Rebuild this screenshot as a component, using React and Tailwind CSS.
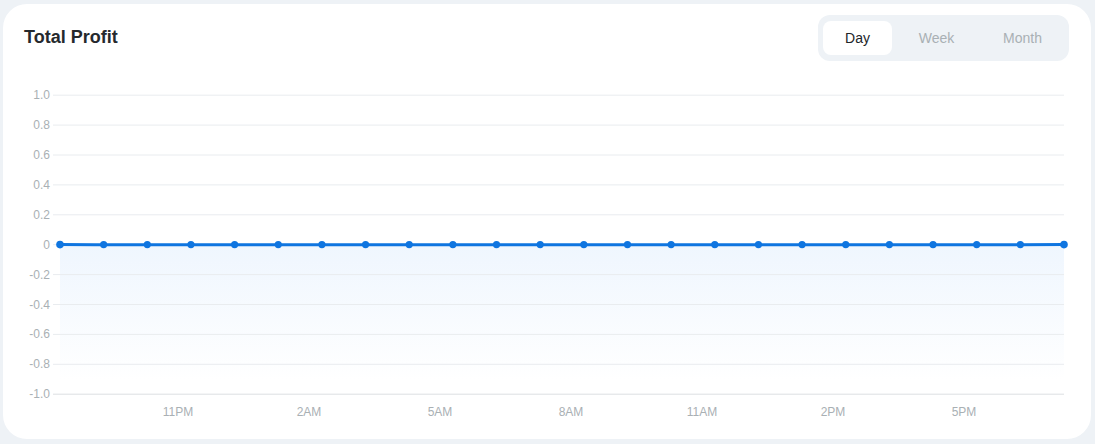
const yLabels = ["1.0","0.8","0.6","0.4","0.2","0","-0.2","-0.4","-0.6","-0.8","-1.0"];
const xLabels = [["11PM",178],["2AM",309],["5AM",440],["8AM",571],["11AM",702],["2PM",833],["5PM",964]];
const TOP = 95, STEP = 29.9;
const OX = 3, OY = 64; // svg origin in page coordinates
const dots = Array.from({length:24},(_,i)=>60+i*(1004/23));

function Chart() {
  return (
    <svg width="1088" height="360" viewBox={`${OX} ${OY} 1088 360`} className="block" style={{fontFamily:'"Liberation Sans", Arial, sans-serif'}}>
      <defs>
        <linearGradient id="area" x1="0" y1="0" x2="0" y2="1">
          <stop offset="0" stopColor="#eff6fe" />
          <stop offset="1" stopColor="#ffffff" />
        </linearGradient>
      </defs>
      <rect x="60" y="245" width="1004" height="135" fill="url(#area)" />
      {yLabels.map((l,i)=>{
        const y = TOP+i*STEP+0.2;
        return (
          <g key={l}>
            <line x1="53" x2="1064" y1={y} y2={y} stroke={i===10?"#dcdfe3":"#e9ecef"} strokeWidth="1" />
            <text x="50" y={y+4} textAnchor="end" fontSize="12" fill="#a9b0b4">{l}</text>
          </g>
        );
      })}
      {xLabels.map(([l,x])=>(
        <text key={l} x={x} y="416" textAnchor="middle" fontSize="12" fill="#a9b0b4">{l}</text>
      ))}
      <path d="M60 244.4 L95 244.8 L1020 244.8 L1064 244.4" fill="none" stroke="#0f75e0" strokeWidth="3" />
      {dots.map((x,i)=>(
        <circle key={i} cx={x} cy="244.6" r={i===0||i===23?3.8:3.6} fill="#0f75e0" />
      ))}
    </svg>
  );
}

export default function App() {
  return (
    <div className="h-[444px] w-[1095px] overflow-hidden bg-[#eef2f6] pt-1 pl-[3px] pr-1 pb-[5px]" style={{fontFamily:'"Liberation Sans", Arial, sans-serif'}}>
      <div className="h-full rounded-3xl bg-white">
        <div className="flex items-start justify-between pt-[11px] pl-[21px] pr-[22px] h-[60px]">
          <h2 className="mt-[11px] text-[18px] leading-[22px] font-bold text-[#25292d]">Total Profit</h2>
          <div className="flex h-[46px] w-[251px] items-center rounded-xl bg-[#eef2f6] px-[5px] text-sm">
            <span className="flex h-[34px] w-[69px] items-center justify-center rounded-lg bg-white text-[#212529]">Day</span>
            <span className="flex h-[34px] w-[89px] items-center justify-center text-[#a9b0b4]">Week</span>
            <span className="flex h-[34px] w-[83px] items-center justify-center text-[#a9b0b4]">Month</span>
          </div>
        </div>
        <Chart />
      </div>
    </div>
  );
}
